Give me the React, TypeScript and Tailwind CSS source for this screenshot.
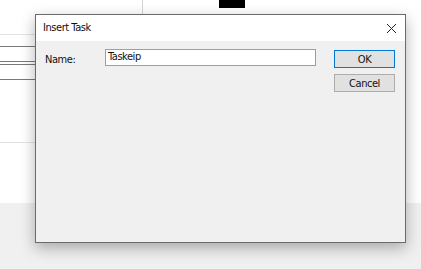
import React from "react";

const font = { fontFamily: '"Liberation Sans Narrow", "DejaVu Sans Condensed", "Liberation Sans", sans-serif' };

const Row = ({ h, line }: { h: string; line: string }) => (
  <div className={`${h} border-b ${line}`} />
);

export default function App() {
  return (
    <div className="relative w-[421px] h-[269px] bg-[#f0f0f0] overflow-hidden" style={font}>
      {/* window behind the dialog */}
      <div className="h-[203px] bg-white flex flex-col">
        <div className="flex h-[14px]">
          <div className="w-[143px] border-r border-[#d4d4d4]" />
          <div className="w-[76px]" />
          <div className="w-[26px] h-[8px] bg-black" />
        </div>
        <div className="w-[36px] flex flex-col">
          <Row h="h-[21px]" line="border-[#e3e3e3]" />
          <Row h="h-[12px]" line="border-[#7a7a7a]" />
          <Row h="h-[15px]" line="border-[#7a7a7a]" />
          <Row h="h-[3px]" line="border-[#7a7a7a]" />
          <Row h="h-[15px]" line="border-[#7a7a7a]" />
          <Row h="h-[63px]" line="border-[#e3e3e3]" />
        </div>
      </div>

      {/* Insert Task dialog */}
      <div className="absolute left-[35px] top-[14px] w-[371px] h-[229px] border border-[#6b6b6b] bg-[#f0f0f0] shadow-[0_5px_14px_rgba(0,0,0,0.3)] flex flex-col tracking-[-0.45px]">
        <div className="h-[26px] bg-white flex items-center justify-between pl-[7px] pr-[8px]">
          <span className="text-[11px] text-[#111]">Insert Task</span>
          <svg width="11" height="11" viewBox="0 0 11 11">
            <path d="M1 1L10 10M10 1L1 10" stroke="#222" strokeWidth="1" />
          </svg>
        </div>
        <div className="flex pt-[8px] pl-[9px] pr-[10px]">
          <span className="text-[11px] text-[#111] w-[60px] pt-[3px]">Name:</span>
          <div className="w-[211px] h-[17px] border border-[#7aa6d6] bg-white flex items-center px-[2px] text-[11px] text-[#111]">
            Taskeip
          </div>
          <div className="ml-auto flex flex-col gap-[6px] pt-[1px]">
            <button className="w-[61px] h-[18px] border border-[#0078d7] bg-[#e1e1e1] text-[11px] text-[#111] leading-none">
              OK
            </button>
            <button className="w-[61px] h-[18px] border border-[#adadad] bg-[#e1e1e1] text-[11px] text-[#111] leading-none">
              Cancel
            </button>
          </div>
        </div>
      </div>
    </div>
  );
}
